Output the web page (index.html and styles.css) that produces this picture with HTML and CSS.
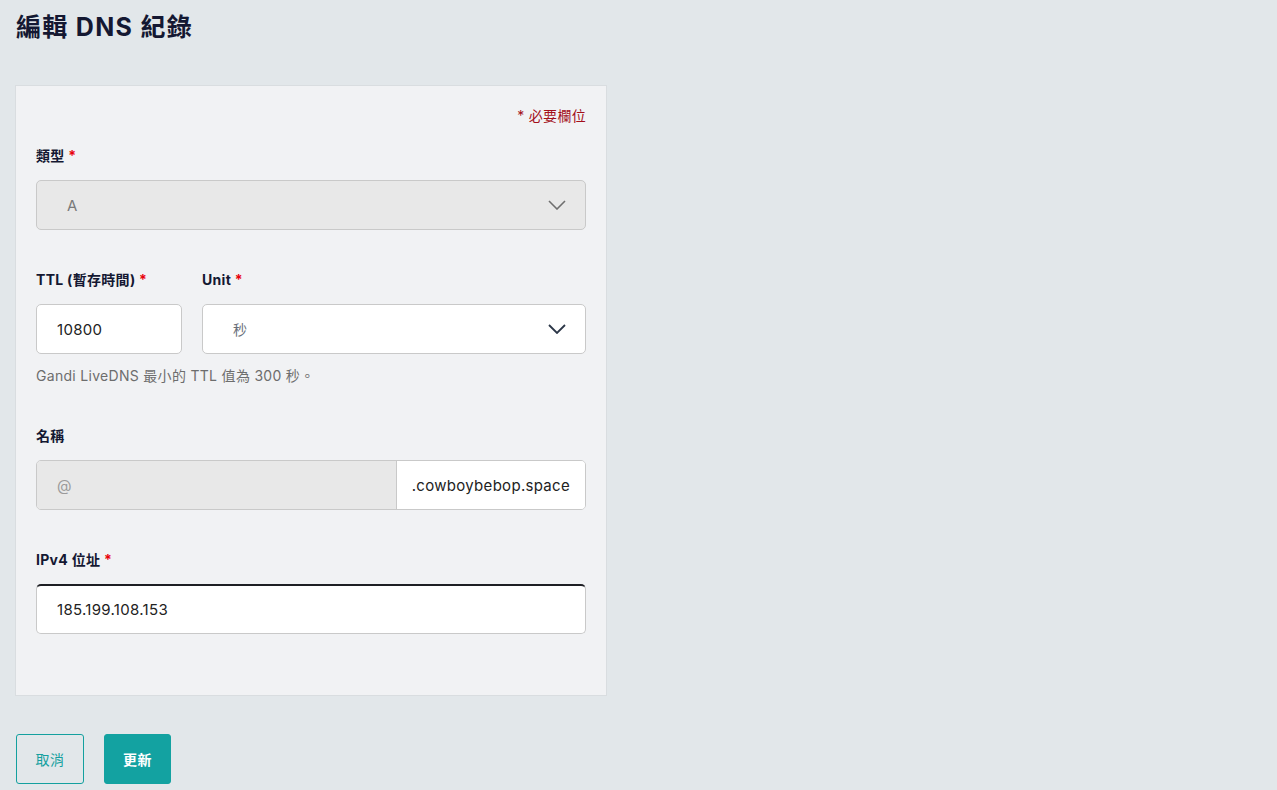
FILE: index.html
```html
<!DOCTYPE html>
<html lang="zh-Hant">
<head>
    <meta charset="UTF-8">
    <meta name="viewport" content="width=device-width, initial-scale=1.0">
    <title>編輯 DNS 紀錄</title>
    <link rel="stylesheet" href="styles.css">
</head>
<body>
    <h1 class="page-title">編輯 DNS 紀錄</h1>

    <form class="record-card">
        <p class="required-note">* 必要欄位</p>

        <div class="field">
            <label class="field-label">類型 <span class="star">*</span></label>
            <div class="select select-disabled">
                <span class="select-value">A</span>
                <svg class="chevron" width="18" height="10" viewBox="0 0 18 10"><path d="M1 1l8 8 8-8" fill="none" stroke="currentColor" stroke-width="1.6"/></svg>
            </div>
        </div>

        <div class="field">
            <div class="ttl-row">
                <div class="ttl-col">
                    <label class="field-label">TTL (暫存時間) <span class="star">*</span></label>
                    <div class="input">10800</div>
                </div>
                <div class="unit-col">
                    <label class="field-label">Unit <span class="star">*</span></label>
                    <div class="select">
                        <span class="select-value unit-value">秒</span>
                        <svg class="chevron chevron-dark" width="18" height="10" viewBox="0 0 18 10"><path d="M1 1l8 8 8-8" fill="none" stroke="currentColor" stroke-width="1.8"/></svg>
                    </div>
                </div>
            </div>
            <p class="help-text">Gandi LiveDNS 最小的 TTL 值為 300 秒。</p>
        </div>

        <div class="field">
            <label class="field-label">名稱</label>
            <div class="input-group">
                <div class="input-prefix">@</div>
                <div class="input-suffix">.cowboybebop.space</div>
            </div>
        </div>

        <div class="field field-last">
            <label class="field-label">IPv4 位址 <span class="star">*</span></label>
            <div class="input input-active">185.199.108.153</div>
        </div>
    </form>

    <div class="actions">
        <button class="btn btn-cancel">取消</button>
        <button class="btn btn-submit">更新</button>
    </div>
</body>
</html>
```

FILE: styles.css
```css
body {
    margin: 0;
    padding: 12px 15px;
    background: #e2e7ea;
    font-family: "Inter", "Noto Sans CJK TC", sans-serif;
    color: #161a33;
    letter-spacing: 0.3px;
}

.page-title {
    margin: 0 0 43px 1px;
    font-size: 25px;
    line-height: 30px;
    font-weight: 700;
    letter-spacing: 1.3px;
    color: #141832;
}

/* card */
.record-card {
    width: 550px;
    padding: 20px 20px 61px;
    background: #f1f2f4;
    border: 1px solid #d9dde0;
}

.required-note {
    margin: 0 0 20px;
    text-align: right;
    font-size: 14px;
    line-height: 20px;
    color: #a30f1a;
}

.field {
    margin-bottom: 40px;
}
.field-last {
    margin-bottom: 0;
}

.field-label {
    display: block;
    margin-bottom: 14px;
    font-size: 14px;
    line-height: 20px;
    font-weight: 700;
    color: #141832;
}
.star {
    color: #e8000b;
}

.select, .input {
    box-sizing: border-box;
    height: 50px;
    border: 1px solid #c9c9c9;
    border-radius: 5px;
    background: #fff;
    font-size: 15px;
    display: flex;
    align-items: center;
}

.select {
    justify-content: space-between;
    padding: 0 19px 0 30px;
}
.select-disabled {
    background: #e8e8e8;
    color: #7a7a7a;
}
.select-disabled .chevron {
    color: #6f6f6f;
}
.chevron-dark {
    color: #2b3647;
}
.unit-value {
    color: #6a6f7a;
    font-size: 14px;
}

.input {
    padding: 0 20px;
    color: #222;
}
.input-active {
    border-top: 2px solid #1e1f24;
}

.ttl-row {
    display: flex;
    gap: 20px;
}
.ttl-col {
    width: 146px;
}
.unit-col {
    flex: 1;
}

.help-text {
    margin: 12px 0 0;
    font-size: 14px;
    line-height: 20px;
    color: #6d6d6d;
}

.input-group {
    box-sizing: border-box;
    display: flex;
    height: 50px;
    border: 1px solid #c9c9c9;
    border-radius: 5px;
    overflow: hidden;
    font-size: 15px;
}
.input-prefix {
    flex: 1;
    display: flex;
    align-items: center;
    padding-left: 20px;
    background: #e8e8e8;
    color: #9a9a9a;
    border-right: 1px solid #c9c9c9;
}
.input-suffix {
    display: flex;
    align-items: center;
    padding: 0 15px;
    background: #fff;
    color: #222;
}

/* buttons */
.actions {
    display: flex;
    gap: 20px;
    margin-top: 38px;
    margin-left: 1px;
}
.btn {
    height: 50px;
    padding: 0 18px;
    border-radius: 3px;
    font-family: inherit;
    font-size: 14px;
    letter-spacing: 0.5px;
    cursor: pointer;
}
.btn-cancel {
    min-width: 68px;
    background: transparent;
    border: 1px solid #14a09f;
    color: #14a09f;
}
.btn-submit {
    min-width: 66px;
    background: #13a2a1;
    border: 1px solid #13a2a1;
    color: #fff;
    font-weight: 700;
}
```
